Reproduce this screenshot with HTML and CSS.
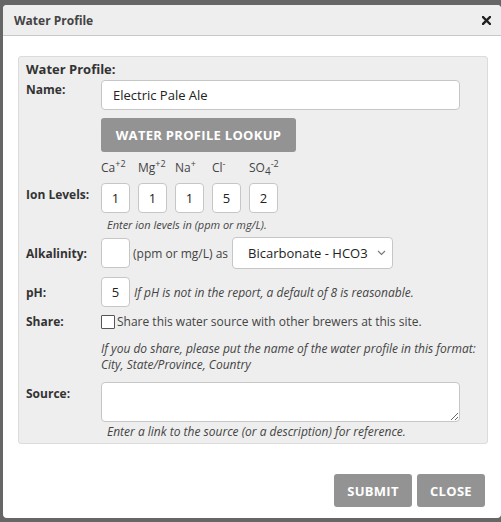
FILE: index.html
```html
<!DOCTYPE html>
<html>
<head>
    <link rel="stylesheet" href="styles.css">
    <title>Water Profile</title>
</head>
<body>
    <div class="dialog">
        <div class="dialog-head">
            <span class="dialog-title">Water Profile</span>
            <svg class="close-x" width="9" height="9" viewBox="0 0 9 9">
                <path d="M1 1 L8 8 M8 1 L1 8" stroke="#222" stroke-width="2.4" stroke-linecap="square"/>
            </svg>
        </div>
        <div class="dialog-body">
            <div class="fieldset">
                <div class="fs-title">Water Profile:</div>

                <div class="row row-name">
                    <label class="lbl">Name:</label>
                    <input type="text" class="txt name-input" value="Electric Pale Ale">
                </div>

                <div class="row">
                    <span class="lbl"></span>
                    <button class="btn lookup">Water Profile Lookup</button>
                </div>

                <div class="row row-ions">
                    <label class="lbl ion-lbl">Ion Levels:</label>
                    <div class="ions">
                        <div class="ion"><span class="ion-name">Ca<sup>+2</sup></span><input class="txt small" value="1"></div>
                        <div class="ion"><span class="ion-name">Mg<sup>+2</sup></span><input class="txt small" value="1"></div>
                        <div class="ion"><span class="ion-name">Na<sup>+</sup></span><input class="txt small" value="1"></div>
                        <div class="ion"><span class="ion-name">Cl<sup>-</sup></span><input class="txt small" value="5"></div>
                        <div class="ion"><span class="ion-name">SO<sub>4</sub><sup>-2</sup></span><input class="txt small" value="2"></div>
                    </div>
                </div>
                <div class="row">
                    <span class="lbl"></span>
                    <p class="note indent ion-note">Enter ion levels in (ppm or mg/L).</p>
                </div>

                <div class="row row-mid row-alk">
                    <label class="lbl">Alkalinity:</label>
                    <input class="txt small" value="">
                    <span class="unit">(ppm or mg/L) as</span>
                    <div class="select-wrap">
                        <select class="sel">
                            <option>Bicarbonate - HCO3</option>
                        </select>
                        <svg class="chev" width="9" height="6" viewBox="0 0 9 6">
                            <path d="M1 1 L4.5 4.5 L8 1" fill="none" stroke="#777" stroke-width="1.1"/>
                        </svg>
                    </div>
                </div>

                <div class="row row-mid row-ph">
                    <label class="lbl">pH:</label>
                    <input class="txt small" value="5">
                    <span class="note inline">If pH is not in the report, a default of 8 is reasonable.</span>
                </div>

                <div class="row row-mid row-share">
                    <label class="lbl">Share:</label>
                    <span class="check"></span>
                    <span class="share-text">Share this water source with other brewers at this site.</span>
                </div>
                <div class="row">
                    <span class="lbl"></span>
                    <p class="note share-note">If you do share, please put the name of the water profile in this format:<br>City, State/Province, Country</p>
                </div>

                <div class="row row-source">
                    <label class="lbl src-lbl">Source:</label>
                    <textarea class="txt area"></textarea>
                </div>
                <div class="row">
                    <span class="lbl"></span>
                    <p class="note indent src-note">Enter a link to the source (or a description) for reference.</p>
                </div>
            </div>
        </div>
        <div class="dialog-foot">
            <button class="btn foot-btn submit">Submit</button>
            <button class="btn foot-btn close">Close</button>
        </div>
    </div>
</body>
</html>
```

FILE: styles.css
```css
body {
    margin: 0;
    background-color: #666;
    font-family: "Open Sans", "DejaVu Sans", sans-serif;
    color: #333;
}
.dialog {
    margin: 5px 0 0 3px;
    width: 498px;
    height: 513px;
    background-color: #fff;
    border-radius: 4px;
    overflow: hidden;
}
.dialog-head {
    display: flex;
    align-items: center;
    justify-content: space-between;
    height: 30px;
    padding: 0 10px 0 11px;
    background-color: #eee;
    border-bottom: 1px solid #c8c8c8;
}
.dialog-title {
    font-size: 12px;
    font-weight: bold;
    color: #444;
}
.close-x {
    display: block;
}
.dialog-body {
    padding: 20px 13px 0 15px;
}
.fieldset {
    background-color: #eee;
    border: 1px solid #dcdcdc;
    border-radius: 3px;
    padding: 3px 7px 4px 7px;
}
.fs-title {
    font-size: 13px;
    font-weight: bold;
    line-height: 18px;
}
.row {
    display: flex;
}
.row-mid {
    align-items: center;
}
.lbl {
    width: 75px;
    flex-shrink: 0;
    font-size: 12px;
    font-weight: bold;
    line-height: 17px;
}
.row-name {
    margin-top: 2px;
}
.row-name .lbl {
    padding-top: 1px;
}
.txt {
    box-sizing: border-box;
    border: 1px solid #c6c6c6;
    border-radius: 4px;
    background-color: #fff;
    font-family: "Open Sans", "DejaVu Sans", sans-serif;
    color: #222;
    margin: 0;
}
.name-input {
    width: 359px;
    height: 30px;
    padding: 0 11px;
    font-size: 13px;
}
.btn {
    border: none;
    border-radius: 3px;
    background-color: #939393;
    color: #fff;
    font-family: "Open Sans", "DejaVu Sans", sans-serif;
    font-weight: bold;
    text-transform: uppercase;
    padding: 0;
}
.lookup {
    margin-top: 8px;
    width: 195px;
    height: 34px;
    font-size: 13px;
    letter-spacing: 0.3px;
}
.row-ions {
    margin-top: 6px;
    align-items: flex-end;
}
.ion-lbl {
    padding-bottom: 10px;
}
.ions {
    display: flex;
    gap: 8px;
}
.ion {
    display: flex;
    flex-direction: column;
}
.ion-name {
    font-size: 12px;
    line-height: 19px;
    height: 25px;
    color: #444;
}
.ion-name sup {
    font-size: 9px;
    vertical-align: 5px;
    line-height: 0;
}
.ion-name sub {
    font-size: 10px;
    vertical-align: -3px;
    line-height: 0;
}
.small {
    width: 29px;
    height: 30px;
    text-align: center;
    font-size: 13px;
    padding: 0;
}
.note {
    margin: 0;
    font-size: 12px;
    font-style: italic;
    color: #444;
    line-height: 15px;
}
.indent {
    padding-left: 6px;
}
.ion-note {
    font-size: 11px;
    margin-top: 4px;
}
.row-alk {
    margin-top: 5px;
}
.unit {
    font-size: 12px;
    margin: 0 4px 0 3px;
    color: #444;
}
.select-wrap {
    position: relative;
}
.sel {
    display: block;
    appearance: none;
    width: 161px;
    height: 32px;
    padding: 0 0 0 15px;
    border: 1px solid #c6c6c6;
    border-radius: 4px;
    background-color: #fff;
    font-family: "Open Sans", "DejaVu Sans", sans-serif;
    font-size: 13px;
    color: #222;
}
.chev {
    position: absolute;
    right: 7px;
    top: 13px;
    pointer-events: none;
}
.row-ph {
    margin-top: 8px;
}
.inline {
    margin-left: 4px;
}
.row-share {
    margin-top: 6px;
}
.check {
    box-sizing: border-box;
    width: 14px;
    height: 14px;
    border: 1px solid #555;
    background-color: #fff;
    border-radius: 1px;
}
.share-text {
    font-size: 12px;
    margin-left: 2px;
    color: #444;
}
.share-note {
    margin-top: 11px;
    line-height: 16px;
}
.row-source {
    margin-top: 9px;
}
.src-lbl {
    padding-top: 3px;
}
.area {
    width: 359px;
    height: 40px;
    resize: vertical;
}
.src-note {
    margin-top: 2px;
}
.dialog-foot {
    display: flex;
    justify-content: flex-end;
    gap: 5px;
    padding: 30px 16px 0 0;
}
.foot-btn {
    height: 33px;
    font-size: 13px;
    letter-spacing: 0.3px;
}
.submit {
    width: 78px;
}
.close {
    width: 68px;
}
```
